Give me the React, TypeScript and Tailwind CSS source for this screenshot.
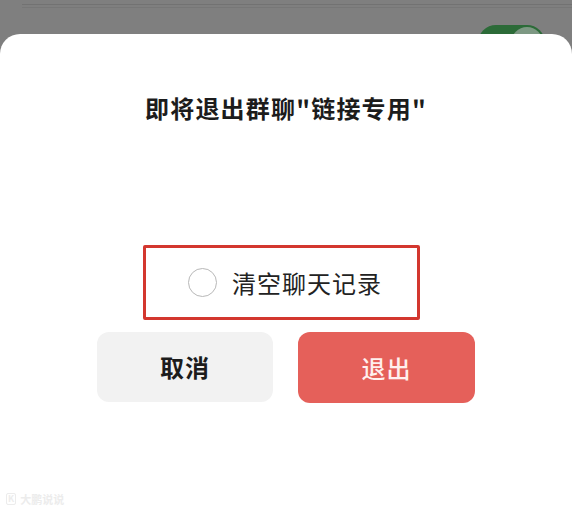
import React from "react";

export default function App() {
  const font = { fontFamily: '"Noto Sans CJK SC", "Noto Sans", sans-serif' };
  return (
    <div className="relative h-[513px] w-[572px] overflow-hidden bg-[#7f7f7f]" style={font}>
      {/* background faint lines */}
      <div className="absolute left-[22px] right-0 top-[4px] h-px bg-[#727272]" />
      <div className="absolute left-[22px] right-0 top-[7px] h-px bg-[#777777]" />
      {/* green toggle peeking behind */}
      <div className="absolute left-[478px] top-[25px] h-[36px] w-[67px] rounded-full bg-[#2c6b38]">
        <div className="absolute right-[2px] top-[2px] h-[32px] w-[32px] rounded-full bg-[#7d9883]" />
      </div>

      <div className="absolute inset-x-0 bottom-0 top-[34px] flex flex-col rounded-t-[20px] bg-white">
        <div className="mt-[58px] text-center text-[24px] font-bold leading-[32px] tracking-[1.2px] text-[#1c1c1c]">
          即将退出群聊"链接专用"
        </div>

        <div className="ml-[143px] mt-[121px] flex h-[75px] w-[277px] items-center rounded-[2px] border-[3px] border-[#d3372f] pl-[42px]">
          <div className="h-[29px] w-[29px] rounded-full border-[1.5px] border-[#b8b8b8]" />
          <span className="ml-[15px] text-[24px] leading-[32px] tracking-[1px] text-[#222]">清空聊天记录</span>
        </div>

        <div className="ml-[97px] mt-[12px] flex gap-[25px]">
          <div className="flex h-[70px] w-[176px] items-center justify-center rounded-[12px] bg-[#f2f2f2] text-[24px] font-bold tracking-[1px] text-[#1c1c1c]">
            取消
          </div>
          <div className="flex h-[71px] w-[177px] items-center justify-center rounded-[12px] bg-[#e5605a] text-[24px] font-medium tracking-[1px] text-[#fff0ee]">
            退出
          </div>
        </div>

        <div className="absolute bottom-[7px] left-[6px] flex items-center gap-[4px] text-[11px] font-bold leading-[14px] text-[#ececec]">
          <span className="rounded-[2px] border border-[#ececec] px-[1px] text-[9px] leading-[10px]">K</span>
          <span>大鹏说说</span>
        </div>
      </div>
    </div>
  );
}
